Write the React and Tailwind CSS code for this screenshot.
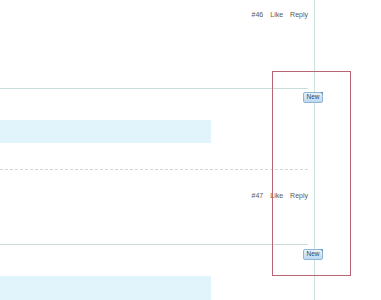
const Meta = ({ n }) => (
  <div className="flex justify-end items-center w-[308px] gap-[7px] text-[7px] leading-[8px] text-[#5a5a5a]">
    <span>#{n}</span>
    <span>Like</span>
    <span>Reply</span>
  </div>
);

const Badge = () => (
  <div className="flex w-[315px] pl-[303px]">
    <div className="relative shrink-0 w-[20px] h-[11px] rounded-[2px] border border-[#8fb4d4] bg-gradient-to-b from-[#e6f2fc] to-[#bcd8f0] flex items-center justify-center text-[6.5px] leading-none text-[#2b4a66]">
      New
      <div className="absolute -top-[1px] -right-[1px] w-0 h-0 border-l-[3px] border-l-transparent border-t-[3px] border-t-[#6f9cc4]" />
    </div>
  </div>
);

export default function App() {
  return (
    <div className="relative w-[381px] h-[300px] overflow-hidden bg-white font-['Liberation_Sans',Arial,sans-serif]">
      <div className="w-[315px] h-[300px] border-r border-[#cde0e0] flex flex-col">
        <div className="h-[89px] w-[308px] border-b border-[#c8dcdc] pt-[11px]">
          <Meta n={46} />
        </div>
        <div className="pt-[3px]">
          <Badge />
        </div>
        <div className="mt-[17px] h-[23px] w-[211px] bg-[#e1f4fb]" />
        <div className="mt-[26px] w-[308px] border-b border-dashed border-[#cfd8d8]" />
        <div className="mt-[22px]">
          <Meta n={47} />
        </div>
        <div className="mt-[44px] w-[308px] border-b border-[#c8dcdc]" />
        <div className="pt-[4px]">
          <Badge />
        </div>
        <div className="mt-[16px] h-[24px] w-[211px] bg-[#e1f4fb]" />
      </div>
      <div className="absolute left-[272px] top-[71px] w-[79px] h-[205px] border border-[#b86472]" />
    </div>
  );
}
